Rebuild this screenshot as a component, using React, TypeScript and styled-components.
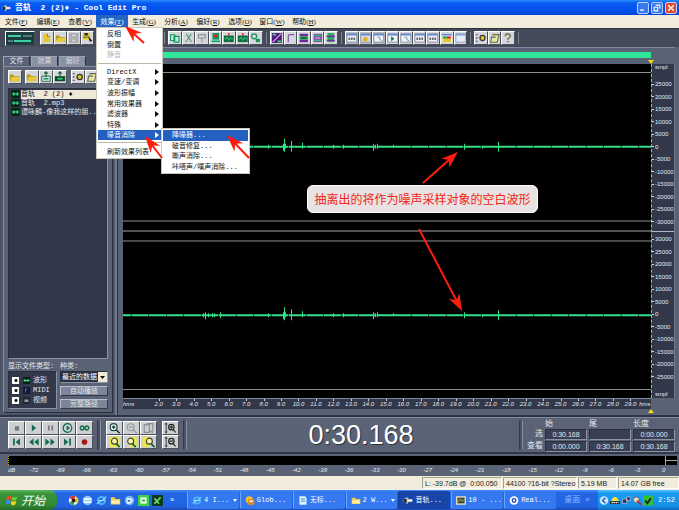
import React from "react";
import styled, { createGlobalStyle, css } from "styled-components";

const ui = `"Liberation Mono", "Noto Sans CJK SC", monospace`;
const sans = `"Liberation Sans", "Noto Sans CJK SC", sans-serif`;

const GlobalStyle = createGlobalStyle`
  * { box-sizing: border-box; }
  body { margin: 0; background: #5a6375; font: 7px/10px ${ui}; color: #e4e8ee; }
  button, input, select, ul, ol { font: inherit; margin: 0; padding: 0; }
  ul, ol { list-style: none; }
`;

const raised = css`
  border: 1px solid;
  border-color: #ffffff #4a4f58 #4a4f58 #ffffff;
`;
const sunken = css`
  border: 1px solid;
  border-color: #2a2f3c #8b94a6 #8b94a6 #2a2f3c;
`;

const Window = styled.div`
  position: relative;
  display: flex;
  flex-direction: column;
  min-height: 100vh;
  overflow: hidden;
`;

/* ---------- title and menu ---------- */
const TitleBar = styled.header`
  display: flex;
  align-items: center;
  gap: 4px;
  height: 15px;
  padding: 0 2px;
  background: linear-gradient(#2a8cff 0, #0a5cf0 3px, #0050ee 11px, #0046d8);
  color: #fff;
`;
const Title = styled.h1`
  flex: 1;
  margin: 0;
  font: bold 8px/12px ${ui};
  white-space: pre;
`;
const CaptionButton = styled.button<{ $close?: boolean }>`
  display: flex;
  width: 12px;
  height: 12px;
  margin-left: -2px;
  border: 1px solid #b8d0ff;
  border-radius: 2px;
  background: ${(p) => (p.$close ? "#e4492a" : "#3a78ee")};
  svg { width: 10px; height: 10px; }
`;
const MenuBar = styled.nav`
  display: flex;
  height: 13px;
  background: #f1ecdb;
`;
const MenuButton = styled.button<{ $open?: boolean }>`
  width: 32px;
  border: 0;
  background: ${(p) => (p.$open ? "#2465c4" : "transparent")};
  color: ${(p) => (p.$open ? "#fff" : "#111")};
  white-space: nowrap;
  font: 7px/12px "Liberation Serif", "Noto Sans CJK SC", serif;
`;
const Popup = styled.ul<{ $sub?: boolean }>`
  position: absolute;
  z-index: 3;
  display: flex;
  flex-direction: column;
  background: #fff;
  border: 1px solid #c9c6ba;
  padding: 1px;
  color: #111;
  ${(p) =>
    p.$sub
      ? "left: 161px; top: 128px; width: 89px; height: 46px;"
      : "left: 96px; top: 27px; width: 67px; height: 132px;"}
`;
const PopupRow = styled.li`
  display: flex;
  flex: 1;
`;
const PopupItem = styled.button<{ $active?: boolean }>`
  display: flex;
  flex: 1;
  align-items: center;
  justify-content: space-between;
  border: 0;
  padding: 0 2px 0 9px;
  line-height: 8px;
  white-space: nowrap;
  background: ${(p) => (p.$active ? "#2460c0" : "transparent")};
  color: ${(p) => (p.$active ? "#fff" : "#111")};
  &:disabled { color: #b5b5b5; }
  svg { width: 4px; height: 6px; }
`;
const PopupRule = styled.li`
  height: 6px;
  padding-top: 2px;
  &::after { content: ""; display: block; height: 1px; background: #b9b6aa; }
`;

/* ---------- toolbar ---------- */
const Toolbar = styled.div`
  display: flex;
  align-items: center;
  height: 19px;
  padding-left: 5px;
  background: #444a59;
  border-top: 1px solid #2e323d;
`;
const MonitorButton = styled.button`
  ${raised}
  width: 30px;
  height: 15px;
  margin-right: 5px;
  background: #1e3c40;
  svg { display: block; width: 28px; height: 13px; }
`;
const ToolGroup = styled.div<{ $w: number }>`
  display: flex;
  width: ${(p) => p.$w}px;
  margin-right: 7px;
  box-shadow: 4px 0 0 -1px #444a59, 5px 0 0 -1px #7c8494;
`;
const ToolButton = styled.button<{ $on?: boolean }>`
  ${raised}
  flex: 1;
  min-width: 0;
  height: 14px;
  background: ${(p) => (p.$on ? "#b9bcc2" : "#d5d7da")};
  svg { display: block; width: 100%; height: 12px; }
`;

/* ---------- workspace ---------- */
const Workspace = styled.div`
  display: flex;
  flex: 1;
`;
const Organizer = styled.aside`
  display: flex;
  flex-direction: column;
  width: 118px;
  padding: 9px 4px 2px 3px;
  background: #4d5667;
  border-right: 1px solid #2c303c;
  box-shadow: inset -2px 0 0 #727c90;
`;
const Tabs = styled.div`
  display: flex;
  gap: 1px;
  height: 10px;
`;
const Tab = styled.button<{ $on?: boolean }>`
  width: 27px;
  border: 1px solid;
  border-color: #9aa3b4 #2a2f3c transparent #9aa3b4;
  background: ${(p) => (p.$on ? "#5a6375" : "#8a92a2")};
  color: ${(p) => (p.$on ? "#e4e8ee" : "#d2d6de")};
  line-height: 8px;
`;
const OrganizerBody = styled.div`
  display: flex;
  flex: 1;
  flex-direction: column;
  padding: 3px 4px 3px;
  background: #5a6375;
  border: 1px solid;
  border-color: #8790a3 #2a2f3c #2a2f3c #8790a3;
`;
const SmallTools = styled.div`
  display: flex;
  height: 14px;
  margin-bottom: 4px;
  > * { flex: none; width: 14px; }
  > :nth-child(2) { margin-left: 3px; }
  > :nth-child(5) { margin-left: 4px; }
`;
const FileList = styled.ul`
  ${sunken}
  flex: 1;
  padding: 1px 2px;
  background: #32374a;
`;
const FileRow = styled.li<{ $on?: boolean }>`
  display: flex;
  height: 9px;
  gap: 1px;
  white-space: pre;
  line-height: 9px;
  color: ${(p) => (p.$on ? "#111" : "#e4e8ee")};
  svg { flex: none; width: 9px; height: 8px; }
  span {
    flex: 1;
    background: ${(p) => (p.$on ? "#efe9d8" : "transparent")};
  }
`;
const Filters = styled.div`
  display: grid;
  grid-template-columns: 49px 48px;
  column-gap: 3px;
  padding-top: 2px;
`;
const FilterLabel = styled.label`
  line-height: 10px;
  white-space: nowrap;
`;
const TypeBox = styled.div`
  ${sunken}
  padding: 3px 2px;
  background: #32374a;
`;
const TypeRow = styled.label`
  display: flex;
  align-items: center;
  gap: 2px;
  height: 10px;
  white-space: nowrap;
  svg { width: 9px; height: 7px; }
`;
const Tick = styled.input`
  appearance: none;
  width: 7px;
  height: 7px;
  margin: 0 1px;
  border: 1px solid #fff;
  background: #fff;
  &:checked { background: radial-gradient(circle at 60% 50%, #111 0 1px, #fff 2px); }
`;
const SideControls = styled.div`
  display: flex;
  flex-direction: column;
  gap: 3px;
`;
const SortBox = styled.div`
  position: relative;
  display: flex;
  svg {
    position: absolute;
    right: 1px;
    top: 1px;
    width: 9px;
    height: 10px;
    pointer-events: none;
  }
`;
const SortSelect = styled.select`
  ${sunken}
  appearance: none;
  width: 100%;
  height: 12px;
  padding-left: 1px;
  border-radius: 0;
  background: #2b3042;
  color: #fff;
`;
const WideButton = styled.button`
  border: 1px solid;
  border-color: #b9c0cc #333845 #333845 #b9c0cc;
  height: 10px;
  background: #7d8698;
  color: #dfe3ea;
  line-height: 8px;
`;

const Editor = styled.main`
  display: grid;
  flex: 1;
  grid-template-columns: minmax(0, 1fr) 24px;
  grid-template-rows: 17px minmax(0, 1fr) 11px 6px;
  padding: 0 4px 0 5px;
  background: #5a6375;
`;
const Overview = styled.div`
  padding-top: 4px;
  border-top: 1px solid #8089a0;
  &::after { content: ""; display: block; height: 6px; background: #2fe59a; }
`;
const Blank = styled.div`
  border-top: 1px solid #8089a0;
`;
const WaveView = styled.div`
  position: relative;
  background: #000;
  > svg {
    position: absolute;
    width: 100%;
    height: 100%;
  }
`;
const Scale = styled.div`
  display: flex;
  flex-direction: column;
  justify-content: space-between;
  background: #32374a;
  border-left: 1px dashed #aeb5c4;
  border-right: 1px solid #6f788c;
  font: 6px/8px ${sans};
`;
const ScaleUnit = styled.div`
  padding-left: 3px;
  line-height: 7px;
`;
const ScaleChannel = styled.ol<{ $top?: boolean }>`
  display: flex;
  flex: 1;
  flex-direction: column;
  ${(p) =>
    p.$top
      ? "margin-top: 7px; padding-bottom: 3px; border-bottom: 1px solid #aeb5c4;"
      : "padding: 1px 0 8px;"}
  li {
    display: flex;
    flex: 1;
    align-items: center;
    gap: 1px;
  }
  li::before { content: ""; width: 2px; height: 1px; background: #cfd4de; }
`;
const TimeRuler = styled.div`
  display: flex;
  background: #32374a;
  border-top: 1px solid #8089a0;
  font: italic 6px/11px ${sans};
`;
const RulerUnit = styled.span<{ $w: number }>`
  width: ${(p) => p.$w}px;
`;
const TimeTick = styled.span`
  position: relative;
  flex: 1;
  text-align: center;
  &::before {
    content: "";
    position: absolute;
    left: 50%;
    top: 0;
    height: 2px;
    border-left: 1px solid #cfd4de;
  }
`;
const Marker = styled.svg<{ $end?: boolean }>`
  justify-self: end;
  align-self: ${(p) => (p.$end ? "end" : "start")};
  width: 6px;
  height: 4px;
  margin-right: -3px;
  z-index: 1;
`;
const LowerMarker = styled(Marker)`
  grid-column: 1;
`;
const OverviewCell = styled.div`
  display: grid;
  > * { grid-area: 1 / 1; }
`;
const Callout = styled.div`
  position: absolute;
  z-index: 2;
  left: 307px;
  top: 185px;
  width: 231px;
  height: 28px;
  border: 1px solid #fff;
  border-radius: 6px;
  background: #e9e2e3;
  color: #f22414;
  font: 12px/26px "Noto Sans CJK SC", sans-serif;
  text-align: center;
  white-space: nowrap;
`;
const Arrows = styled.svg`
  position: absolute;
  z-index: 4;
  left: 0;
  top: 0;
  width: 679px;
  height: 510px;
  pointer-events: none;
`;

/* ---------- transport ---------- */
const Transport = styled.section`
  display: flex;
  height: 39px;
  padding: 3px 2px 2px 3px;
  border-top: 2px solid #2f3441;
  border-bottom: 2px solid #333845;
  background: #5a6375;
  box-shadow: inset 0 1px 0 #8089a0;
`;
const Pad = styled.div<{ $cols: number }>`
  display: grid;
  flex: none;
  grid-template-columns: repeat(${(p) => p.$cols}, 17px);
  grid-template-rows: 14px 14px;
  align-content: center;
  margin-left: 5px;
`;
const PadButton = styled.button`
  ${raised}
  background: #cdcfd2;
  svg { display: block; width: 15px; height: 12px; }
`;
const Divider = styled.i`
  width: 4px;
  margin: 0 0 0 4px;
  border: 1px solid;
  border-color: transparent #8790a3 transparent #343a48;
  background: #4a5263;
`;
const Clock = styled.output`
  flex: 1;
  align-self: center;
  padding-left: 20px;
  text-align: center;
  color: #fff;
  font: 27px/30px ${sans};
  text-shadow: 1px 1px 0 #2b303c;
`;
const Readouts = styled.table`
  flex: none;
  width: 154px;
  height: 32px;
  table-layout: fixed;
  border-collapse: separate;
  border-spacing: 2px 0;
  th {
    padding: 0;
    font-weight: normal;
    font-size: 8px;
    line-height: 8px;
    text-align: left;
    white-space: nowrap;
  }
  th[scope="row"] { text-align: right; }
  td { padding: 0; }
  tr > :first-child { width: 18px; }
`;
const Readout = styled.output`
  ${sunken}
  display: block;
  height: 11px;
  background: #3a4052;
  text-align: center;
  font: 7px/9px ${sans};
`;
const Meter = styled.section`
  height: 22px;
  padding: 2px 2px 0 8px;
  background: #5a6375;
`;
const MeterBar = styled.div`
  display: flex;
  justify-content: flex-end;
  height: 9px;
  background: #000;
  border-left: 1px dotted #c9b400;
  svg { width: 12px; height: 9px; }
`;
const MeterScale = styled.div`
  display: flex;
  font: italic 6px/10px ${sans};
`;
const Db = styled.span<{ $unit?: boolean }>`
  flex: ${(p) => (p.$unit ? "0 0 13px" : "1")};
  text-align: ${(p) => (p.$unit ? "left" : "center")};
`;
const StatusBar = styled.footer`
  display: flex;
  justify-content: flex-end;
  height: 14px;
  padding: 1px 0;
  background: #f1ecdb;
  color: #222;
`;
const StatusCell = styled.span<{ $w: number }>`
  width: ${(p) => p.$w}px;
  margin-left: 1px;
  padding-left: 2px;
  border: 1px solid;
  border-color: #a7a392 #fff #fff #a7a392;
  font: 7px/11px ${sans};
  white-space: pre;
`;

/* ---------- taskbar ---------- */
const Taskbar = styled.div`
  display: flex;
  height: 20px;
  background: linear-gradient(#4a90ff 0, #2366e4 3px, #2264e2 16px, #1b4cb8);
`;
const StartButton = styled.button`
  display: flex;
  align-items: center;
  gap: 3px;
  width: 57px;
  padding-left: 6px;
  border: 0;
  border-radius: 0 8px 8px 0;
  background: linear-gradient(#5cb85c, #389238 4px, #338a33 15px, #256c25);
  color: #fff;
  font: italic 12px/18px "Noto Sans CJK SC", sans-serif;
  svg { width: 12px; height: 12px; }
`;
const QuickLaunch = styled.div`
  display: flex;
  align-items: center;
  gap: 2px;
  width: 130px;
  padding-left: 11px;
`;
const QuickButton = styled.button`
  width: 12px;
  height: 14px;
  border: 0;
  background: none;
  color: #fff;
  svg { display: block; width: 11px; height: 11px; }
`;
const Tasks = styled.div`
  display: flex;
  flex: 1;
  gap: 1px;
  padding: 1px 0 1px;
`;
const TaskButton = styled.button<{ $on?: boolean }>`
  display: flex;
  flex: 1;
  align-items: center;
  gap: 2px;
  min-width: 0;
  padding-left: 4px;
  border: 0;
  border-left: 1px solid ${(p) => (p.$on ? "#123a90" : "#6ea4ff")};
  border-radius: 2px;
  background: ${(p) => (p.$on ? "#1846a8" : "#3478f2")};
  color: #fff;
  white-space: pre;
  svg { flex: none; width: 10px; height: 11px; }
  span { flex: 1; text-align: left; }
  svg:last-child { width: 4px; height: 3px; margin-right: 2px; }
`;
const DesktopLabel = styled.button`
  width: 42px;
  border: 0;
  background: none;
  color: #8fb4ff;
  font: 8px/18px ${ui};
  white-space: pre;
`;
const Tray = styled.div`
  display: flex;
  align-items: center;
  gap: 1px;
  width: 81px;
  padding-left: 1px;
  background: linear-gradient(#5cc4ff 0, #189cf0 3px, #1590e8 16px, #0f6cc0);
  color: #fff;
  svg { width: 10px; height: 11px; }
  time { flex: 1; text-align: center; }
`;

/* ---------- icons ---------- */
const G = "#13965a";
const art: Record<string, React.ReactNode> = {
  app: <><path d="M1 5l5-3 2 3h5v4H8l-2 3-5-3z" fill="#b4b8c0" /><path d="M6 7h7" stroke="#fff" strokeWidth="2" /><path d="M1 5h4v5H2z" fill="#222" /></>,
  min: <path d="M3 10h5" stroke="#fff" strokeWidth="2" />,
  restore: <path d="M5 3h6v5M3 6h5v5H3z" fill="none" stroke="#fff" strokeWidth="1.5" />,
  close: <path d="M3 3l8 8M11 3l-8 8" stroke="#fff" strokeWidth="2" />,
  file: <><path d="M3 2h5l3 3v7H3z" fill="#e8c62a" /><path d="M8 2v3h3" fill="#fff" stroke="#8a6e00" /></>,
  folder: <><path d="M1 4h4l1 2h6v6H1z" fill="#b89a18" /><path d="M3 7h10l-2 5H1z" fill="#e6cc3c" /></>,
  folderW: <><path d="M1 3h5l1 2h6v7H1z" fill="#f0cc50" /><path d="M2 7h10v4H2z" fill="#fff0b0" /></>,
  save: <path d="M2 2h10v10H2zM4 2v4h6V2M4 12V8h6v4" fill="none" stroke="#a2a4a8" strokeWidth="1.5" />,
  disk: <><path d="M1 1h9v8H1z" fill="#e4d02c" /><path d="M3 1h4v3H3zM7 4l6 7-3 0 0 2z" fill="#222" /><path d="M1 6h6" stroke="#444" /></>,
  copy: <path d="M2 3h5v7H2zM6 5h6v7H6z" fill="#bff0d8" stroke={G} strokeWidth="1.3" />,
  cut: <path d="M4 2l5 8M10 2L5 10M3 11h2M9 11h2" stroke="#5f9a82" strokeWidth="1.5" />,
  paste: <path d="M3 3h8v4H3zM7 7v5" fill="none" stroke="#8b9a94" strokeWidth="1.5" />,
  pasteNew: <><path d="M3 1h8v8H3z" fill={G} /><path d="M5 3h4v3H5z" fill="#d22" /><path d="M2 11h10" stroke="#0a6" strokeWidth="2" /></>,
  waveBox: <><path d="M1 4h12v8H1z" fill="#0c6a3c" /><path d="M2 8h2l1-2 2 4 2-4 1 2h2" stroke="#3ee08c" fill="none" /><path d="M7 1v3" stroke="#d33" strokeWidth="2" /></>,
  search: <><circle cx="5" cy="5" r="3" fill="none" stroke={G} strokeWidth="1.5" /><path d="M7 8h5v4H7z" fill={G} /></>,
  fx: <><path d="M1 1h12v12H1z" fill="#4c1a78" /><path d="M2 12L12 2" stroke="#f2a0e8" strokeWidth="1.5" /><path d="M2 3h4M8 11h4" stroke="#3de07e" strokeWidth="2" /></>,
  curve: <path d="M4 12V5q0-2 2-2h5" fill="none" stroke="#7f5aa8" strokeWidth="1.5" />,
  bars: <><path d="M2 2h10v3H2zM2 9h10v3H2z" fill="#6d2aa0" /><path d="M2 5h10v4H2z" fill="#18a050" /><path d="M4 7h6" stroke="#111" /></>,
  bars2: <><path d="M2 2h10v10H2z" fill="#8a40b4" /><path d="M3 4h8M3 10h8" stroke="#2ad070" strokeWidth="1.5" /><path d="M4 7h6" stroke="#eee" /></>,
  bars3: <><path d="M3 1h8v11H3z" fill="#20b458" /><path d="M2 5h10M2 10h10" stroke="#7a2aa8" strokeWidth="2" /></>,
  win: <><path d="M1 2h12v10H1z" fill="#eef0f4" stroke="#7c8498" /><path d="M1 3h12" stroke="#5f8ad8" strokeWidth="2" /><path d="M3 8h8" stroke="#667" strokeWidth="3" strokeDasharray="2 1" /></>,
  winY: <><path d="M1 2h12v10H1z" fill="#d8dade" stroke="#9098a8" /><path d="M1 3h12" stroke="#5f8ad8" strokeWidth="2" /><path d="M4 6h5v5H4z" fill="#d8b020" /></>,
  winPlay: <><path d="M1 2h12v10H1z" fill="#f2f4f6" stroke="#7c8498" /><path d="M1 3h12" stroke="#5f8ad8" strokeWidth="2" /><path d="M5 5l4 3-4 3z" fill="#0a7a38" /></>,
  winMag: <><path d="M1 2h12v10H1z" fill="#f2f4f6" stroke="#7c8498" /><path d="M1 3h12" stroke="#5f8ad8" strokeWidth="2" /><path d="M5 6h3v2l3 3" fill="none" stroke="#7aa" strokeWidth="1.3" /></>,
  winColor: <><path d="M1 2h12v10H1z" fill="#f2f4f6" /><path d="M1 3h12" stroke="#5f8ad8" strokeWidth="2" /><path d="M2 5h5v3H2z" fill="#3a3" /><path d="M7 5h5v3H7z" fill="#d33" /><path d="M2 8h10v4H2z" fill="#e6c82a" /></>,
  winBlank: <><path d="M1 2h12v10H1z" fill="#e8ecf6" stroke="#8c9cc0" /><path d="M1 3h12" stroke="#7fa0e0" strokeWidth="2" /></>,
  gear: <><path d="M1 3h2M1 7h2M1 11h2" stroke="#556" strokeWidth="1.5" /><circle cx="9" cy="7" r="3" fill="#e2c81a" stroke="#333" strokeWidth="1.5" /></>,
  note: <path d="M4 3h8l-2 9H2l1-6h5" fill="#e8e4b0" stroke="#6a6a40" strokeWidth="1.3" />,
  help: <><path d="M4 5q0-3 3-3t3 3q0 1-3 3v1" fill="none" stroke="#7a7f5a" strokeWidth="2" /><path d="M6 11h2v1H6z" fill="#444" /></>,
  insert: <><path d="M2 6h10v6H2z" fill="#e8efe8" stroke="#0f5a38" /><path d="M7 1v6M5 3l2-2 2 2" stroke="#0f5a38" fill="none" strokeWidth="1.3" /><path d="M4 9h6" stroke={G} strokeWidth="2" /></>,
  insertD: <><path d="M1 6h12v6H1z" fill="#0f4a30" /><path d="M7 1v5M5 3l2-2 2 2" stroke="#0f5a38" fill="none" strokeWidth="1.3" /><path d="M4 9h6" stroke="#2ad070" strokeWidth="2" /></>,
  wavFile: <><path d="M0 0h14v14H0z" fill="#062414" /><path d="M1 7h12" stroke="#37e690" strokeWidth="2" /><path d="M4 4v6M10 4v6" stroke="#37e690" strokeWidth="2" /></>,
  midi: <><path d="M0 0h14v14H0z" fill="#101833" /><path d="M5 11V3l4 2" fill="none" stroke="#3a66ff" strokeWidth="2" /></>,
  video: <><path d="M0 0h14v14H0z" fill="#222630" /><path d="M3 5h8v5H3z" fill="#8f98a4" /></>,
  stop: <path d="M5 5h5v5H5z" fill="#777" />,
  play: <path d="M5 3l5 4-5 4z" fill="#0d6a48" />,
  pause: <path d="M5 4v6M9 4v6" stroke="#777" strokeWidth="2" />,
  playLoop: <><circle cx="7" cy="7" r="5" fill="none" stroke="#0d6a48" strokeWidth="1.4" /><path d="M6 4l4 3-4 3z" fill="#0d6a48" /></>,
  loop: <path d="M7 7q-2-3-4-2t0 4q2 1 4-2 2-3 4-2t0 4q-2 1-4-2z" fill="none" stroke="#0d6a48" strokeWidth="1.6" />,
  first: <><path d="M4 3v8" stroke="#0d6a48" strokeWidth="2" /><path d="M11 3L6 7l5 4z" fill="#0d6a48" /></>,
  rew: <path d="M7 3L2 7l5 4zM13 3L8 7l5 4z" fill="#0d6a48" />,
  fwd: <path d="M1 3l5 4-5 4zM7 3l5 4-5 4z" fill="#0d6a48" />,
  last: <><path d="M10 3v8" stroke="#0d6a48" strokeWidth="2" /><path d="M3 3l5 4-5 4z" fill="#0d6a48" /></>,
  rec: <circle cx="7" cy="7" r="3.3" fill="#a81418" />,
  zoomIn: <><circle cx="6" cy="6" r="4" fill="#dfe" stroke="#245" strokeWidth="1.4" /><path d="M9 9l4 4M4 6h4M6 4v4" stroke="#132" strokeWidth="1.6" /></>,
  zoomOut: <><circle cx="6" cy="6" r="4" fill="none" stroke="#909498" strokeWidth="1.3" /><path d="M9 9l4 4M4 6h4" stroke="#909498" strokeWidth="1.5" /></>,
  zoomAll: <path d="M2 3h6v9H2zM5 2h7v9M9 10l3 3" fill="none" stroke="#8c9094" strokeWidth="1.4" />,
  zoomSel: <><path d="M1 1h12v12H1z" fill="#efe648" /><circle cx="7" cy="6" r="3.5" fill="#f8f4b0" stroke="#443" strokeWidth="1.3" /><path d="M9 9l4 4" stroke="#063" strokeWidth="2" /></>,
  zoomSel2: <><path d="M4 1h9v12H4z" fill="#efe648" /><circle cx="6" cy="6" r="3.5" fill="#f8f4b0" stroke="#443" strokeWidth="1.3" /><path d="M8 9l4 4" stroke="#063" strokeWidth="2" /></>,
  zoomSel3: <><path d="M0 1h8v12H0z" fill="#efe648" /><circle cx="8" cy="6" r="3.5" fill="#f8f4b0" stroke="#443" strokeWidth="1.3" /><path d="M10 9l4 4" stroke="#063" strokeWidth="2" /></>,
  vIn: <><path d="M2 2v10M1 3l1-2 1 2M1 11l1 2 1-2" stroke="#222" fill="none" /><circle cx="8" cy="6" r="3.2" fill="none" stroke="#222" strokeWidth="1.4" /><path d="M10 9l3 3M6 6h4M8 4v4" stroke="#132" strokeWidth="1.3" /></>,
  vOut: <><path d="M2 2v10M1 3l1-2 1 2M1 11l1 2 1-2" stroke="#222" fill="none" /><circle cx="8" cy="6" r="3.2" fill="none" stroke="#222" strokeWidth="1.4" /><path d="M10 9l3 3M6 6h4" stroke="#132" strokeWidth="1.3" /></>,
  flag: <><path d="M1 3q3-2 5 0v4q-2-2-6 0z" fill="#f04a24" /><path d="M7 3q3 2 6 0l-1 4q-3 2-5 0z" fill="#6cd03c" /><path d="M0 8q3-2 5 0v4q-2-2-6 0z" fill="#3c8cff" /><path d="M6 8q3 2 6 0l-1 4q-3 2-5 0z" fill="#ffd21e" /></>,
  player: <><circle cx="7" cy="7" r="6" fill="#f4f4f4" /><path d="M2 4a6 6 0 018-2L7 6z" fill="#e03020" /><path d="M11 3a6 6 0 011 8L8 8z" fill="#f0c020" /><path d="M2 9a6 6 0 006 4L7 8z" fill="#38a040" /><circle cx="7" cy="7" r="2.5" fill="#222" /></>,
  globe: <><circle cx="7" cy="7" r="6" fill="#8cc8ff" /><path d="M2 5h10M2 9h10" stroke="#fff" strokeWidth="2" /></>,
  ie: <><circle cx="7" cy="7" r="4.5" fill="none" stroke="#49b4ff" strokeWidth="2.5" /><path d="M3 7h8M1 11Q8 8 13 2" stroke="#9adcff" strokeWidth="1.4" fill="none" /></>,
  mail: <><circle cx="7" cy="7" r="6" fill="#78b8f0" /><path d="M3 4h6l2 3-3 4H4z" fill="#e8f4ff" /><path d="M5 7l3 1" stroke="#1d64c0" strokeWidth="2" /></>,
  green: <><path d="M0 0h14v14H0z" fill="#3cd048" /><path d="M3 3h8v8H3z" fill="#eaffea" /><path d="M5 7h4" stroke="#2a9a30" strokeWidth="2" /></>,
  dark: <><path d="M0 0h14v14H0z" fill="#0c3a20" /><path d="M3 11L11 3M3 4l6 7" stroke="#6fe060" strokeWidth="2" /></>,
  badge: <><circle cx="6" cy="6" r="5" fill="#f4c42c" /><path d="M4 5h9v8H4z" fill="#e88a1c" /><path d="M6 8h5" stroke="#fff" strokeWidth="2" /></>,
  doc: <><path d="M2 1h8l2 3v9H2z" fill="#dff2ff" /><path d="M4 5h6M4 8h6" stroke="#2a9ac8" strokeWidth="1.5" /></>,
  photo: <><path d="M0 1h14v12H0z" fill="#ddd8c0" /><path d="M2 3h10v8H2z" fill="#3d4a34" /><path d="M3 9l3-4 3 3 2-2" stroke="#f0d880" fill="none" /></>,
  real: <><circle cx="7" cy="7" r="6" fill="#fff" /><circle cx="7" cy="7" r="2.500" fill="none" stroke="#1848b0" strokeWidth="1.8" /></>,
  chev: <><circle cx="7" cy="7" r="6" fill="#cfe8ff" /><path d="M9 3L5 7l4 4" stroke="#1b5cd0" strokeWidth="2" fill="none" /></>,
  cab: <><path d="M1 8q6-12 12 0z" fill="#ffe23a" /><path d="M0 8h14v4H0z" fill="#222" /><path d="M2 10h10" stroke="#fff" strokeWidth="1.5" strokeDasharray="2 1" /></>,
  net: <path d="M2 5h6v6H2zM8 2h5v5H8z" fill="#2b2f50" stroke="#c0c8e8" />,
  speaker: <><circle cx="6" cy="6" r="4" fill="#e8d8d0" stroke="#555" /><path d="M7 7l6 6" stroke="#c22" strokeWidth="2" /></>,
  msn: <><path d="M0 0h14v14H0z" fill="#34c02c" /><path d="M3 7l3 4 5-7" stroke="#123" strokeWidth="2.5" fill="none" /></>,
};
const Icon = ({ name }: { name: string }) => (
  <svg viewBox="0 0 14 14" aria-hidden="true">{art[name]}</svg>
);
const RightMark = () => (
  <svg viewBox="0 0 4 6"><path d="M0 0l4 3-4 3z" fill="currentColor" /></svg>
);

/* ---------- data ---------- */
const menus: [string, string][] = [
  ["文件", "F"], ["编辑", "E"], ["查看", "V"], ["效果", "T"], ["生成", "G"],
  ["分析", "A"], ["偏好", "R"], ["选项", "O"], ["窗口", "W"], ["帮助", "H"],
];
type Entry = { label: string; sub?: boolean; active?: boolean; off?: boolean } | null;
const effects: Entry[] = [
  { label: "反相" }, { label: "倒置" }, { label: "静音", off: true }, null,
  { label: "DirectX", sub: true }, { label: "变速/变调", sub: true },
  { label: "波形振幅", sub: true }, { label: "常用效果器", sub: true },
  { label: "滤波器", sub: true }, { label: "特殊", sub: true },
  { label: "噪音消除", sub: true, active: true }, null, { label: "刷新效果列表" },
];
const noise: Entry[] = [
  { label: "降噪器...", active: true }, { label: "破音修复..." },
  { label: "嘶声消除..." }, { label: "咔嗒声/噗声消除..." },
];
const toolGroups: { w: number; icons: string[] }[] = [
  { w: 54, icons: ["file", "folder", "save", "disk"] },
  { w: 60, icons: ["file", "save", "copy", "cut"] },
  { w: 95, icons: ["copy", "cut", "paste", "pasteNew", "waveBox", "waveBox", "search"] },
  { w: 68, icons: ["fx", "curve", "bars", "bars2", "bars3"] },
  { w: 122, icons: ["win", "winY", "winMag", "winPlay", "winMag", "win", "win", "winColor", "winBlank"] },
  { w: 41, icons: ["gear", "note", "help"] },
];
const files = ["音轨  2 (2) ♦", "音轨  2.mp3", "谭咏麟-像我这样的朋.."];
const types: [string, string][] = [["波形", "wavFile"], ["MIDI", "midi"], ["视频", "video"]];
const upper = Array.from({ length: 12 }, (_, i) => 25000 - i * 5000);
const lower = Array.from({ length: 12 }, (_, i) => 30000 - i * 5000);
const seconds = Array.from({ length: 28 }, (_, i) => `${i + 2}.0`);
const decibels = Array.from({ length: 25 }, (_, i) => i * 3 - 72);
const tasks: { icon: string; label: string; on?: boolean; group?: boolean }[] = [
  { icon: "ie", label: "4 I...", group: true },
  { icon: "badge", label: "Glob..." },
  { icon: "doc", label: "无标..." },
  { icon: "folderW", label: "2 W...", group: true },
  { icon: "app", label: "音轨...", on: true },
  { icon: "photo", label: "10 - ..." },
  { icon: "real", label: "Real..." },
];
/* x, height above the axis, height below the axis */
const peaks = [
  [42, 1, 1], [80, 2, 2], [82, 3, 4], [85, 2, 2], [89, 2, 2], [91, 2, 2], [97, 3, 3],
  [145, 2, 2], [160, 3, 4], [161, 8, 5], [162, 3, 2], [168, 6, 5], [179, 4, 2],
  [210, 2, 2], [220, 2, 2], [250, 3, 4], [252, 2, 2], [254, 3, 2], [270, 2, 1],
  [341, 3, 3], [359, 1, 2], [375, 5, 5],
];

const Menu = ({ items, sub }: { items: Entry[]; sub?: boolean }) => (
  <Popup $sub={sub} role="menu">
    {items.map((e, i) =>
      e === null ? <PopupRule key={i} role="separator" /> : (
        <PopupRow key={i} role="none">
          <PopupItem role="menuitem" $active={e.active} disabled={e.off}>
            {e.label}{e.sub && <RightMark />}
          </PopupItem>
        </PopupRow>
      ))}
  </Popup>
);

const Channel = ({ y }: { y: number }) => (
  <g stroke="#34e08a">
    <path d={`M0 ${y}H528`} strokeWidth="2" strokeDasharray="16.9 .6" strokeDashoffset="9" />
    <path d={peaks.map(([x, a, b]) => `M${x + 0.5} ${y - a}V${y + b}`).join("")} strokeWidth="1" />
  </g>
);

const Arrow = ({ from, to }: { from: [number, number]; to: [number, number] }) => {
  const angle = (Math.atan2(to[1] - from[1], to[0] - from[0]) * 180) / Math.PI;
  const length = Math.hypot(to[0] - from[0], to[1] - from[1]);
  return (
    <g transform={`translate(${to[0]} ${to[1]}) rotate(${angle})`}>
      <path d={`M${-length} 0H-8`} stroke="#ff1c0c" strokeWidth="2" />
      <path d="M0 0L-17 -6L-12 0L-17 6Z" fill="#ff1c0c" />
    </g>
  );
};

export default function App() {
  return (
    <Window>
      <GlobalStyle />
      <TitleBar>
        <svg width="9" height="10" viewBox="0 0 14 14">{art.app}</svg>
        <Title>音轨  2 (2)♦ - Cool Edit Pro</Title>
        <CaptionButton aria-label="最小化"><Icon name="min" /></CaptionButton>
        <CaptionButton aria-label="还原"><Icon name="restore" /></CaptionButton>
        <CaptionButton aria-label="关闭" $close><Icon name="close" /></CaptionButton>
      </TitleBar>
      <MenuBar>
        {menus.map(([name, key]) => (
          <MenuButton key={key} $open={key === "T"}>{name}(<u>{key}</u>)</MenuButton>
        ))}
      </MenuBar>
      <Toolbar>
        <MonitorButton aria-label="多轨视图">
          <svg viewBox="0 0 28 13">
            <path d="M2 4h13M8 9h17" stroke="#3fd0a0" strokeWidth="2" />
            <path d="M17 4h9M2 9h5" stroke="#8fb8b8" strokeWidth="1" />
          </svg>
        </MonitorButton>
        {toolGroups.map((g, i) => (
          <ToolGroup key={i} $w={g.w}>
            {g.icons.map((n, k) => (
              <ToolButton key={k} aria-label={n} $on={i === 4 && k < 3}><Icon name={n} /></ToolButton>
            ))}
          </ToolGroup>
        ))}
      </Toolbar>

      <Workspace>
        <Organizer>
          <Tabs>
            <Tab $on>文件</Tab><Tab>效果</Tab><Tab>偏好</Tab>
          </Tabs>
          <OrganizerBody>
            <SmallTools>
              {["folder", "folder", "insert", "insertD", "gear", "note"].map((n, i) => (
                <ToolButton key={i} aria-label={n}><Icon name={n} /></ToolButton>
              ))}
            </SmallTools>
            <FileList>
              {files.map((f, i) => (
                <FileRow key={f} $on={i === 0}><Icon name="wavFile" /><span>{f}</span></FileRow>
              ))}
            </FileList>
            <Filters>
              <FilterLabel as="span">显示文件类型:</FilterLabel>
              <FilterLabel htmlFor="sort">种类:</FilterLabel>
              <TypeBox>
                {types.map(([t, icon]) => (
                  <TypeRow key={t}><Tick type="checkbox" defaultChecked /><Icon name={icon} />{t}</TypeRow>
                ))}
              </TypeBox>
              <SideControls>
                <SortBox>
                  <SortSelect id="sort"><option>最近的数据</option></SortSelect>
                  <svg viewBox="0 0 9 10"><path d="M0 0h9v10H0z" fill="#efe9d8" /><path d="M2 4h5L4.500 7z" fill="#111" /></svg>
                </SortBox>
                <WideButton>自动播放</WideButton>
                <WideButton>完整路径</WideButton>
              </SideControls>
            </Filters>
          </OrganizerBody>
        </Organizer>

        <Editor>
          <OverviewCell>
            <Overview />
            <Marker $end viewBox="0 0 6 4"><path d="M0 0h6L3 4z" fill="#f2dc10" /></Marker>
          </OverviewCell>
          <Blank />
          <WaveView>
            <svg viewBox="0 0 528 335" preserveAspectRatio="none">
              <path d="M0 8.500H528M0 157.500H528M0 177.500H528M0 326.500H528" stroke="#8e938c" />
              <path d="M0 167.500H528" stroke="#a4a8b0" />
              <Channel y={83} />
              <Channel y={252} />
            </svg>
          </WaveView>
          <Scale>
            <ScaleUnit>smpl</ScaleUnit>
            <ScaleChannel $top>{upper.map((v) => <li key={v}>{v}</li>)}</ScaleChannel>
            <ScaleChannel>{lower.map((v) => <li key={v}>{v}</li>)}</ScaleChannel>
            <ScaleUnit>smpl</ScaleUnit>
          </Scale>
          <TimeRuler>
            <RulerUnit $w={27}>hms</RulerUnit>
            {seconds.map((s) => <TimeTick key={s}>{s}</TimeTick>)}
            <RulerUnit $w={12}>hms</RulerUnit>
          </TimeRuler>
          <LowerMarker viewBox="0 0 6 4"><path d="M0 4h6L3 0z" fill="#f2dc10" /></LowerMarker>
        </Editor>
      </Workspace>

      <Transport>
        <Pad $cols={5}>
          {["stop", "play", "pause", "playLoop", "loop", "first", "rew", "fwd", "last", "rec"].map((n) => (
            <PadButton key={n} aria-label={n}><Icon name={n} /></PadButton>
          ))}
        </Pad>
        <Divider />
        <Pad $cols={3}>
          {["zoomIn", "zoomOut", "zoomAll", "zoomSel", "zoomSel2", "zoomSel3"].map((n) => (
            <PadButton key={n} aria-label={n}><Icon name={n} /></PadButton>
          ))}
        </Pad>
        <Pad $cols={1}>
          {["vIn", "vOut"].map((n) => <PadButton key={n} aria-label={n}><Icon name={n} /></PadButton>)}
        </Pad>
        <Divider />
        <Clock>0:30.168</Clock>
        <Divider />
        <Readouts>
          <thead>
            <tr><th /><th scope="col">始</th><th scope="col">尾</th><th scope="col">长度</th></tr>
          </thead>
          <tbody>
            <tr>
              <th scope="row">选</th>
              <td><Readout>0:30.168</Readout></td><td><Readout /></td><td><Readout>0:00.000</Readout></td>
            </tr>
            <tr>
              <th scope="row">查看</th>
              <td><Readout>0:00.000</Readout></td><td><Readout>0:30.168</Readout></td><td><Readout>0:30.168</Readout></td>
            </tr>
          </tbody>
        </Readouts>
      </Transport>
      <Meter>
        <MeterBar>
          <svg viewBox="0 0 12 9"><path d="M.5 0V9M.5 4.500H12" stroke="#9aa" /></svg>
        </MeterBar>
        <MeterScale>
          <Db $unit>dB</Db>
          {decibels.map((d) => <Db key={d}>{d}</Db>)}
        </MeterScale>
      </Meter>
      <StatusBar>
        <StatusCell $w={80}>L: -39.7dB @  0:00.050</StatusCell>
        <StatusCell $w={74}>44100 ?16-bit ?Stereo</StatusCell>
        <StatusCell $w={39}>5.19 MB</StatusCell>
        <StatusCell $w={61}>14.07 GB free</StatusCell>
      </StatusBar>
      <Taskbar>
        <StartButton><Icon name="flag" />开始</StartButton>
        <QuickLaunch>
          {["player", "globe", "ie", "folderW", "mail", "green", "dark"].map((n) => (
            <QuickButton key={n} aria-label={n}><Icon name={n} /></QuickButton>
          ))}
          <QuickButton>»</QuickButton>
        </QuickLaunch>
        <Tasks>
          {tasks.map((t) => (
            <TaskButton key={t.label} $on={t.on}>
              <Icon name={t.icon} />
              <span>{t.label}</span>
              {t.group && <svg viewBox="0 0 4 3"><path d="M0 0h4L2 3z" fill="#fff" /></svg>}
            </TaskButton>
          ))}
        </Tasks>
        <DesktopLabel>桌面 »</DesktopLabel>
        <Tray>
          {["chev", "cab", "net", "speaker", "msn"].map((n) => <Icon key={n} name={n} />)}
          <time>2:52</time>
        </Tray>
      </Taskbar>

      <Menu items={effects} />
      <Menu items={noise} sub />
      <Callout>抽离出的将作为噪声采样对象的空白波形</Callout>
      <Arrows viewBox="0 0 679 510">
        <Arrow from={[144, 43]} to={[125, 26]} />
        <Arrow from={[162, 158]} to={[145, 136]} />
        <Arrow from={[249, 158]} to={[227, 135]} />
        <Arrow from={[423, 183]} to={[458, 152]} />
        <Arrow from={[419, 229]} to={[462, 311]} />
      </Arrows>
    </Window>
  );
}
